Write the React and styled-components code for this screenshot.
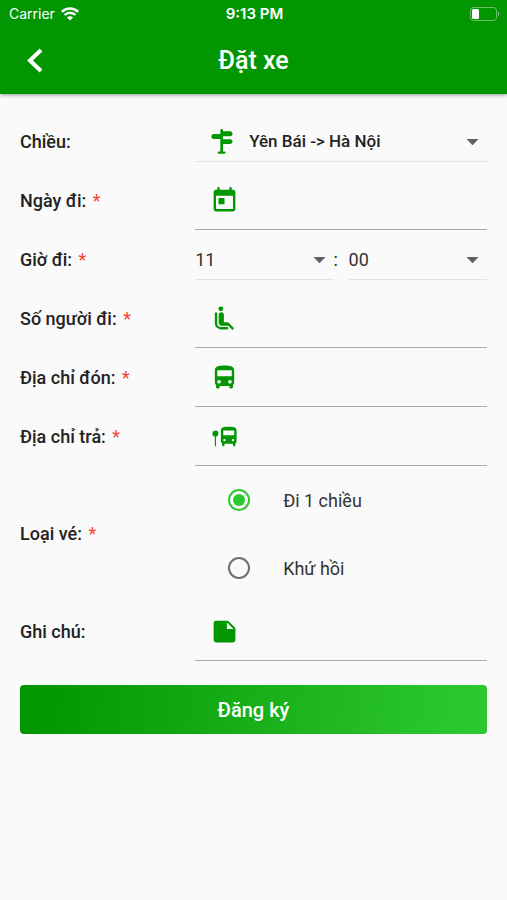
import React, { useState } from 'react'
import styled, { createGlobalStyle } from 'styled-components'
import { MdArrowDropDown, MdDirectionsBus, MdToday } from 'react-icons/md'

const GlobalStyle = createGlobalStyle`
  * {
    box-sizing: border-box;
  }

  body {
    margin: 0;
    background: #fafafa;
    color: #222;
    font-family: Roboto, "Noto Sans", sans-serif;
  }
`

const Page = styled.div`
  min-height: 100vh;
  background: #fafafa;
`

const Header = styled.header`
  background: #039603;
  color: #fff;
  box-shadow: 0 1px 4px rgba(0, 0, 0, 0.4);
`

const StatusBar = styled.div`
  display: grid;
  grid-template-columns: 1fr auto 1fr;
  align-items: center;
  height: 27px;
  padding: 0 7px 0 9px;
  font-family: Inter, sans-serif;
  font-size: 14px;
`

const Carrier = styled.div`
  display: flex;
  align-items: center;
  gap: 6px;
`

const Clock = styled.div`
  font-size: 15px;
  font-weight: 600;
`

const BatteryIcon = styled.svg`
  justify-self: end;
`

const AppBar = styled.div`
  display: grid;
  grid-template-columns: 70px 1fr 70px;
  align-items: center;
  height: 67px;
`

const BackButton = styled.button`
  display: flex;
  justify-content: center;
  padding: 0;
  border: 0;
  background: none;
  color: inherit;
  cursor: pointer;
`

const Title = styled.h1`
  margin: 0;
  text-align: center;
  font-size: 25px;
  font-weight: 500;
  line-height: 28px;
`

const Form = styled.form`
  padding: 18px 20px;
`

const Row = styled.div`
  display: grid;
  grid-template-columns: 3fr 5fr;
  align-items: center;
  min-height: 59px;
`

const Label = styled.label`
  font-size: 18px;
  font-weight: 500;
  line-height: 24px;
`

const Required = styled.span`
  margin-left: 2px;
  color: #f44336;
  font-weight: 400;
`

const InputBox = styled.div`
  display: flex;
  align-items: center;
  height: 59px;
  padding-left: 15px;
  border-bottom: 1px solid #aaa;
  color: #039603;
`

const Input = styled.input`
  flex: 1;
  min-width: 0;
  height: 40px;
  padding: 0 10px;
  border: 0;
  outline: 0;
  background: none;
  color: #222;
  font: inherit;
  font-size: 18px;
`

const SelectBox = styled.div`
  flex: 1;
  display: grid;
  grid-template-columns: 54px 1fr 29px;
  align-items: center;
  height: 40px;
  border-bottom: 1px solid #e4e4e4;
`

const SelectIcon = styled.span`
  grid-area: 1 / 1;
  display: flex;
  padding-left: 15px;
  color: #039603;
  pointer-events: none;
`

const Select = styled.select`
  grid-area: 1 / 1 / 2 / 4;
  width: 100%;
  height: 38px;
  padding: 0 29px 0 ${(props) => (props.$withIcon ? '54px' : '0')};
  border: 0;
  outline: 0;
  appearance: none;
  background: none;
  color: ${(props) => (props.$withIcon ? '#222' : '#333')};
  font-family: inherit;
  font-size: ${(props) => (props.$withIcon ? '17px' : '18px')};
  font-weight: ${(props) => (props.$withIcon ? 500 : 400)};
`

const Arrow = styled(MdArrowDropDown)`
  grid-area: 1 / 3;
  color: #616161;
  pointer-events: none;
`

const TimeBox = styled.div`
  display: flex;
  align-items: center;
`

const Colon = styled.span`
  width: 15px;
  font-size: 18px;
`

const RadioGroup = styled.div`
  display: flex;
  flex-direction: column;
`

const RadioLabel = styled.label`
  display: flex;
  align-items: center;
  gap: 33px;
  height: 68px;
  padding-left: 33px;
  color: #333;
  font-size: 18px;
`

const Radio = styled.input`
  appearance: none;
  display: grid;
  place-content: center;
  width: 22px;
  height: 22px;
  margin: 0;
  border: 2px solid #707070;
  border-radius: 50%;

  &:checked {
    border-color: #2dc82f;
  }

  &:checked::after {
    content: '';
    width: 12px;
    height: 12px;
    border-radius: 50%;
    background: #2dc82f;
  }
`

const SubmitButton = styled.button`
  width: 100%;
  height: 49px;
  margin-top: 24px;
  border: 0;
  border-radius: 4px;
  background: linear-gradient(100deg, #039603 5%, #2dc82f 95%);
  color: #fff;
  font-family: inherit;
  font-size: 20px;
  font-weight: 500;
  cursor: pointer;
`

const WifiIcon = () => (
  <svg width="18" height="14" viewBox="0 0 18 14" fill="none" stroke="#fff" strokeWidth="2.4" aria-hidden="true">
    <path d="M.9 4.8a11.6 11.6 0 0 1 16.2 0" />
    <path d="M3.6 8a7.6 7.6 0 0 1 10.8 0" />
    <path d="M9 13.6L5.9 10.5a4.4 4.4 0 0 1 6.2 0z" fill="#fff" stroke="none" />
  </svg>
)

const Battery = () => (
  <BatteryIcon width="30" height="14" viewBox="0 0 30 14" aria-hidden="true">
    <rect x=".5" y=".5" width="26" height="13" rx="3" fill="none" stroke="#fff" strokeOpacity=".4" />
    <rect x="2" y="2" width="7" height="10" rx="1.5" fill="#fff" />
    <path d="M28 4.8c1.6.6 1.6 3.8 0 4.4z" fill="#fff" fillOpacity=".5" />
  </BatteryIcon>
)

const SignsIcon = () => (
  <svg width="25" height="25" viewBox="0 0 25 25" fill="currentColor" aria-hidden="true">
    <path d="M10.3 1.3a1.3 1.3 0 0 1 2.7 0v1h7.4c1 0 2.2 1.5 2.2 2.5s-1.2 2.5-2.2 2.5H13v2.9h7.4c1 0 2.2 1.4 2.2 2.4s-1.2 2.4-2.2 2.4H13v7.6h1.5a1 1 0 0 1 0 2.1H8.800a1 1 0 0 1 0-2.1h1.5V10H3.500c-1 0-2.2-1.5-2.2-2.5S2.500 5 3.500 5h6.800z" />
  </svg>
)

const MdiIcon = ({ d }) => (
  <svg width="29" height="29" viewBox="0 0 24 24" fill="currentColor" aria-hidden="true">
    <path d={d} />
  </svg>
)

const seatPath =
  'M7.59 5.41c-.78-.78-.78-2.05 0-2.83s2.05-.78 2.83 0 .78 2.05 0 2.83-2.05.78-2.83 0M6 16V7H4v9a5 5 0 0 0 5 5h6v-2H9a3 3 0 0 1-3-3m14 4.07L14.93 15H11.5V9a2 2 0 0 0-4.3 0v6a3 3 0 0 0 3 3h4.87l3.5 3.5z'
const busStopPath =
  'M22 7v9c0 .71-.38 1.36-1 1.72v1.53c0 .41-.34.75-.75.75h-.5a.75.75 0 0 1-.75-.75V18h-7v1.25c0 .41-.34.75-.75.75h-.5a.75.75 0 0 1-.75-.75v-1.53A2 2 0 0 1 9 16V7c0-3 3-3 6.5-3S22 4 22 7m-9 8a1 1 0 1 0-2 0 1 1 0 0 0 2 0m7 0a1 1 0 1 0-2 0 1 1 0 0 0 2 0m0-8h-9v4h9V7M7 9.5A2.5 2.5 0 1 0 4 12v8h1v-8a2.5 2.5 0 0 0 2-2.5'
const notePath =
  'M14 10V4.5l5.5 5.5M5 3a2 2 0 0 0-2 2v14a2 2 0 0 0 2 2h14a2 2 0 0 0 2-2V9l-6-6z'

const pad = (n) => String(n).padStart(2, '0')
const hours = Array.from({ length: 24 }, (_, i) => pad(i))
const minutes = ['00', '15', '30', '45']

const TextRow = ({ id, label, required, icon }) => (
  <Row>
    <Label htmlFor={id}>
      {label} {required && <Required>*</Required>}
    </Label>
    <InputBox>
      {icon}
      <Input id={id} name={id} type="text" />
    </InputBox>
  </Row>
)

function App() {
  const [direction, setDirection] = useState('yb-hn')
  const [hour, setHour] = useState('11')
  const [minute, setMinute] = useState('00')
  const [ticket, setTicket] = useState('one-way')

  return (
    <Page>
      <GlobalStyle />
      <Header>
        <StatusBar>
          <Carrier>
            Carrier
            <WifiIcon />
          </Carrier>
          <Clock>9:13 PM</Clock>
          <Battery />
        </StatusBar>
        <AppBar>
          <BackButton type="button" aria-label="Quay lại">
            <svg width="16" height="26" viewBox="0 0 16 26" fill="none" stroke="currentColor" strokeWidth="4">
              <path d="M14 2L3 12.5 14 23" />
            </svg>
          </BackButton>
          <Title>Đặt xe</Title>
        </AppBar>
      </Header>

      <Form onSubmit={(e) => e.preventDefault()}>
        <Row>
          <Label htmlFor="direction">Chiều:</Label>
          <SelectBox>
            <SelectIcon>
              <SignsIcon />
            </SelectIcon>
            <Select id="direction" $withIcon value={direction} onChange={(e) => setDirection(e.target.value)}>
              <option value="yb-hn">Yên Bái -&gt; Hà Nội</option>
              <option value="hn-yb">Hà Nội -&gt; Yên Bái</option>
            </Select>
            <Arrow size={29} />
          </SelectBox>
        </Row>

        <TextRow id="date" label="Ngày đi:" required icon={<MdToday size={29} />} />

        <Row>
          <Label htmlFor="hour">
            Giờ đi: <Required>*</Required>
          </Label>
          <TimeBox>
            <SelectBox>
              <Select id="hour" value={hour} onChange={(e) => setHour(e.target.value)}>
                {hours.map((h) => (
                  <option key={h}>{h}</option>
                ))}
              </Select>
              <Arrow size={29} />
            </SelectBox>
            <Colon>:</Colon>
            <SelectBox>
              <Select aria-label="Phút" value={minute} onChange={(e) => setMinute(e.target.value)}>
                {minutes.map((m) => (
                  <option key={m}>{m}</option>
                ))}
              </Select>
              <Arrow size={29} />
            </SelectBox>
          </TimeBox>
        </Row>

        <TextRow id="people" label="Số người đi:" required icon={<MdiIcon d={seatPath} />} />
        <TextRow id="pickup" label="Địa chỉ đón:" required icon={<MdDirectionsBus size={29} />} />
        <TextRow id="dropoff" label="Địa chỉ trả:" required icon={<MdiIcon d={busStopPath} />} />

        <Row>
          <Label as="span" id="ticket-label">
            Loại vé: <Required>*</Required>
          </Label>
          <RadioGroup role="radiogroup" aria-labelledby="ticket-label">
            <RadioLabel>
              <Radio
                type="radio"
                name="ticket"
                checked={ticket === 'one-way'}
                onChange={() => setTicket('one-way')}
              />
              Đi 1 chiều
            </RadioLabel>
            <RadioLabel>
              <Radio
                type="radio"
                name="ticket"
                checked={ticket === 'round'}
                onChange={() => setTicket('round')}
              />
              Khứ hồi
            </RadioLabel>
          </RadioGroup>
        </Row>

        <TextRow id="note" label="Ghi chú:" icon={<MdiIcon d={notePath} />} />

        <SubmitButton type="submit">Đăng ký</SubmitButton>
      </Form>
    </Page>
  )
}

export default App
